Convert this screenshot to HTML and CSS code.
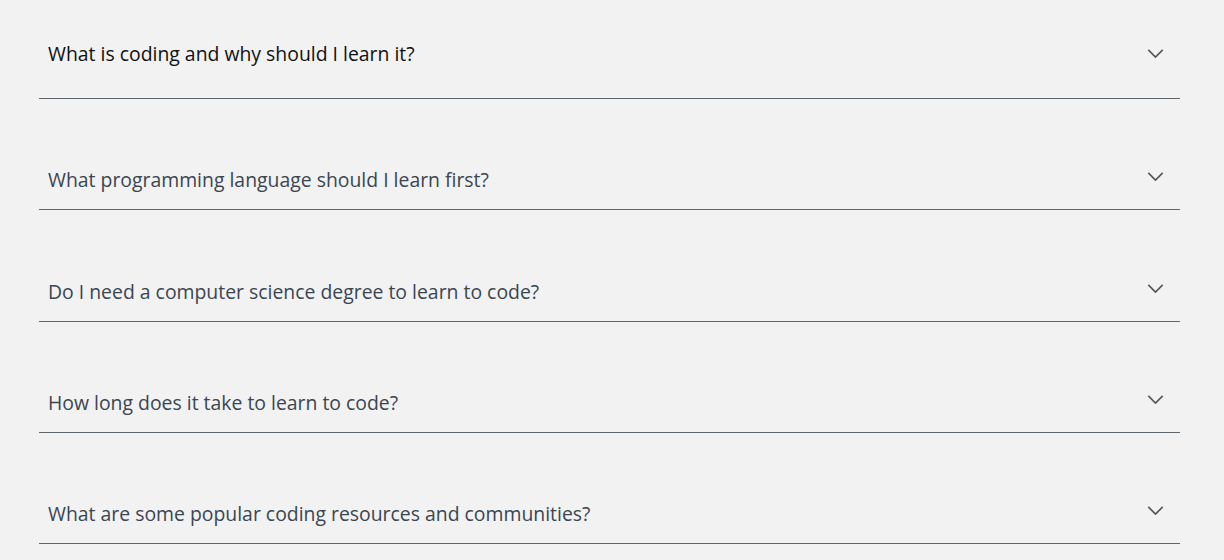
FILE: index.html
```html
<!DOCTYPE html>
<html lang="en">

<head>
  <meta charset="UTF-8">
  <meta name="viewport" content="width=device-width, initial-scale=1.0">
  <title>FAQ</title>
  <link rel="stylesheet" href="styles.css">
</head>

<body>
  <div class="faq">
    <div class="item open">
      <div class="question">
        <span>What is coding and why should I learn it?</span>
        <svg class="chev" viewBox="0 0 18 10" width="17" height="9"><path d="M1 1l8 8 8-8" /></svg>
      </div>
    </div>
    <div class="item">
      <div class="question">
        <span>What programming language should I learn first?</span>
        <svg class="chev" viewBox="0 0 18 10" width="17" height="9"><path d="M1 1l8 8 8-8" /></svg>
      </div>
    </div>
    <div class="item">
      <div class="question">
        <span>Do I need a computer science degree to learn to code?</span>
        <svg class="chev" viewBox="0 0 18 10" width="17" height="9"><path d="M1 1l8 8 8-8" /></svg>
      </div>
    </div>
    <div class="item">
      <div class="question">
        <span>How long does it take to learn to code?</span>
        <svg class="chev" viewBox="0 0 18 10" width="17" height="9"><path d="M1 1l8 8 8-8" /></svg>
      </div>
    </div>
    <div class="item">
      <div class="question">
        <span>What are some popular coding resources and communities?</span>
        <svg class="chev" viewBox="0 0 18 10" width="17" height="9"><path d="M1 1l8 8 8-8" /></svg>
      </div>
    </div>
  </div>
</body>

</html>
```

FILE: styles.css
```css
body {
  margin: 0;
  padding: 0;
  background: #f2f2f2;
  font-family: "Open Sans", Arial, sans-serif;
}

.faq {
  width: 1141px;
  margin-left: 39px;
}

.item {
  padding: 69.3px 16px 17px 9px;
  border-bottom: 1px solid #5f666c;
}

.item.open {
  padding-top: 42px;
  padding-bottom: 32px;
}

.question {
  display: flex;
  justify-content: space-between;
  align-items: flex-start;
  font-size: 19.4px;
  line-height: 24px;
  color: #3a4650;
}

.item.open .question {
  color: #111;
}

.chev {
  margin-top: 4px;
  fill: none;
  stroke: #555a5e;
  stroke-width: 1.9;
}

.item.open .chev {
  margin-top: 7px;
}
```
